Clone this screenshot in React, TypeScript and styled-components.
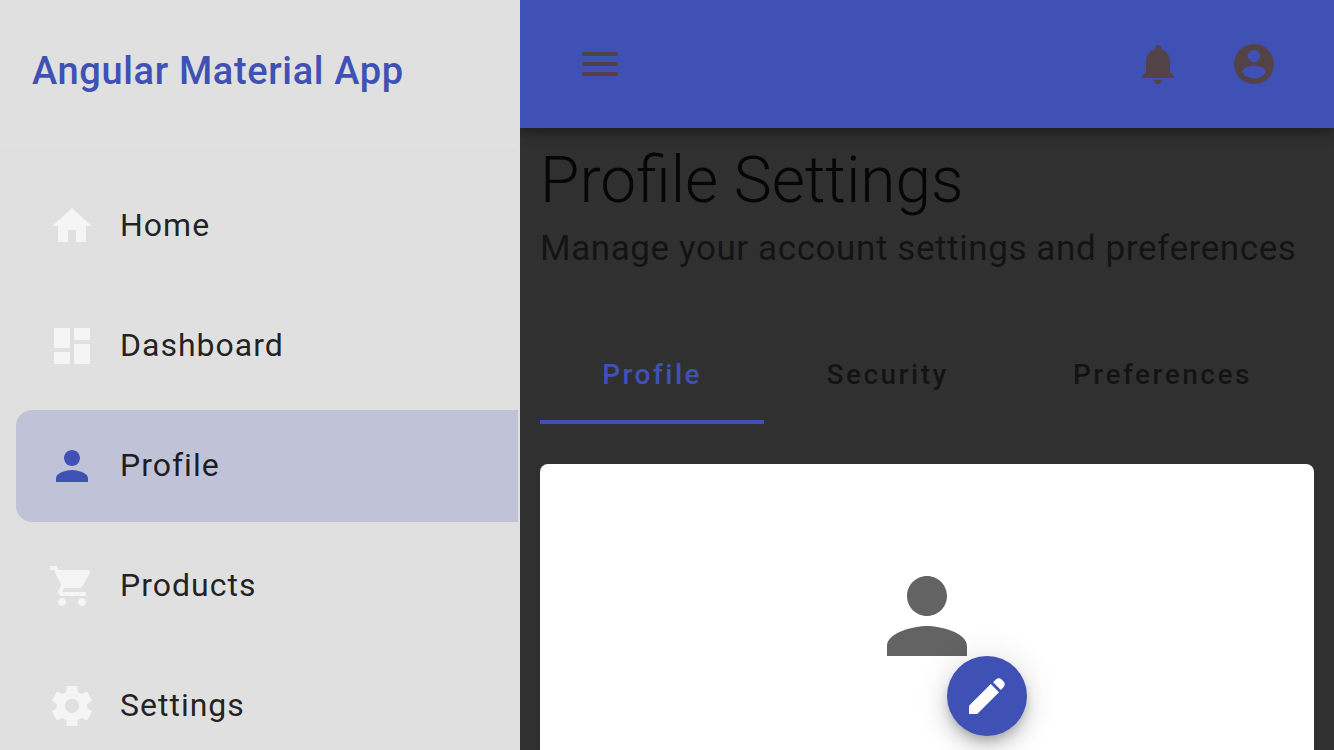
import React from 'react';
import styled, { createGlobalStyle } from 'styled-components';

const PRIMARY = '#3f51b5';

const GlobalStyle = createGlobalStyle`
  *, *::before, *::after { box-sizing: border-box; }
  html, body, #root { height: 100%; }
  body {
    margin: 0;
    overflow: hidden;
    background: #303030;
    font-family: Roboto, "Liberation Sans", sans-serif;
    color: rgba(0, 0, 0, 0.87);
  }
`;

const Shell = styled.div`
  display: flex;
  height: 100%;
`;

const Sidenav = styled.aside`
  flex: none;
  width: 520px;
  overflow: hidden;
  background: #e0e0e0;
  border-right: 2px solid #e0e0e0;
`;

const SidenavHeader = styled.header`
  display: flex;
  align-items: center;
  height: 146px;
  padding: 0 32px 2px;
  border-bottom: 2px solid #e3e3e3;
`;

const AppName = styled.h2`
  margin: 0;
  font-size: 38px;
  line-height: 64px;
  font-weight: 500;
  letter-spacing: 0.017em;
  color: ${PRIMARY};
`;

const NavList = styled.nav`
  display: flex;
  flex-direction: column;
  gap: 8px;
  padding: 24px 0 24px 16px;
`;

const NavItem = styled.a<{ $active?: boolean }>`
  display: flex;
  align-items: center;
  gap: 24px;
  height: 112px;
  padding: 0 32px;
  border-radius: 16px 0 0 16px;
  background: ${(p) => (p.$active ? 'rgba(63, 81, 181, 0.2)' : 'transparent')};
  color: rgba(0, 0, 0, 0.87);
  text-decoration: none;

  svg { color: ${(p) => (p.$active ? PRIMARY : '#f5f5f5')}; }
`;

const NavLabel = styled.span`
  padding-bottom: 2px;
  font-size: 32px;
  line-height: 48px;
  letter-spacing: 0.03125em;
`;

const Svg = styled.svg<{ $size: number }>`
  display: block;
  flex: none;
  width: ${(p) => p.$size}px;
  height: ${(p) => p.$size}px;
  fill: currentColor;
`;

const Main = styled.div`
  flex: 1;
  min-width: 0;
  display: flex;
  flex-direction: column;
  overflow: hidden;
`;

const Toolbar = styled.header`
  flex: none;
  display: flex;
  align-items: center;
  justify-content: space-between;
  height: 128px;
  padding: 0 32px;
  background: ${PRIMARY};
  box-shadow: 0 4px 8px -2px rgba(0, 0, 0, 0.2), 0 8px 10px rgba(0, 0, 0, 0.14),
    0 2px 20px rgba(0, 0, 0, 0.12);
`;

const ToolbarActions = styled.div`
  display: flex;
`;

const IconButton = styled.button`
  display: flex;
  align-items: center;
  justify-content: center;
  width: 96px;
  height: 96px;
  padding: 0;
  border: 0;
  border-radius: 50%;
  background: transparent;
  color: #534346;
  cursor: pointer;
`;

const Content = styled.main`
  padding: 20px;
`;

const PageHeader = styled.div`
  display: flex;
  flex-direction: column;
  gap: 12px;
  margin-bottom: 56px;
`;

const PageTitle = styled.h1`
  margin: 0;
  font-size: 64px;
  line-height: 66px;
  font-weight: 300;
  color: #060606;
`;

const PageSubtitle = styled.p`
  margin: 0;
  font-size: 35px;
  line-height: 46px;
  letter-spacing: 0.017em;
  color: rgba(0, 0, 0, 0.6);
`;

const Tabs = styled.div`
  display: flex;
  height: 96px;
`;

const Tab = styled.button<{ $active?: boolean }>`
  flex: 1 1 auto;
  padding: 0 48px 2px;
  border: 0;
  background: linear-gradient(${PRIMARY}, ${PRIMARY}) bottom / 100%
    ${(p) => (p.$active ? '4px' : '0')} no-repeat;
  color: ${(p) => (p.$active ? PRIMARY : 'rgba(0, 0, 0, 0.6)')};
  font-family: inherit;
  font-size: 28px;
  line-height: 40px;
  font-weight: 500;
  letter-spacing: 0.0892857em;
  cursor: pointer;
`;

const Card = styled.section`
  display: flex;
  justify-content: center;
  margin-top: 40px;
  padding: 72px 32px;
  border-radius: 8px;
  background: #fff;
`;

const Avatar = styled.div`
  position: relative;
  display: flex;
  justify-content: center;
  width: 200px;
  height: 200px;
  padding-top: 20px;
  color: #636363;
`;

const EditButton = styled.button`
  position: absolute;
  right: 0;
  bottom: 0;
  display: flex;
  align-items: center;
  justify-content: center;
  width: 80px;
  height: 80px;
  padding: 0;
  border: 0;
  border-radius: 50%;
  background: ${PRIMARY};
  color: #fff;
  box-shadow: 0 6px 10px -2px rgba(0, 0, 0, 0.2), 0 12px 20px rgba(0, 0, 0, 0.14),
    0 2px 36px rgba(0, 0, 0, 0.12);
  cursor: pointer;
`;

const paths = {
  home: 'M10 20v-6h4v6h5v-8h3L12 3 2 12h3v8z',
  dashboard: 'M3 13h8V3H3v10zm0 8h8v-6H3v6zm10 0h8V11h-8v10zm0-18v6h8V3h-8z',
  person:
    'M12 12c2.21 0 4-1.79 4-4s-1.79-4-4-4-4 1.79-4 4 1.79 4 4 4zm0 2c-2.67 0-8 1.34-8 4v2h16v-2c0-2.66-5.33-4-8-4z',
  cart:
    'M7 18c-1.1 0-1.99.9-1.99 2S5.9 22 7 22s2-.9 2-2-.9-2-2-2zM1 2v2h2l3.6 7.59-1.35 2.45c-.16.28-.25.61-.25.96 0 1.1.9 2 2 2h12v-2H7.42c-.14 0-.25-.11-.25-.25l.03-.12.9-1.63h7.45c.75 0 1.41-.41 1.75-1.03l3.58-6.49c.08-.14.12-.31.12-.48 0-.55-.45-1-1-1H5.21l-.94-2H1zm16 16c-1.1 0-1.99.9-1.99 2s.89 2 1.99 2 2-.9 2-2-.9-2-2-2z',
  settings:
    'M9.4 22l-.4-3.1c-.5-.2-1.1-.5-1.6-.9L4.5 19.2 1.9 14.8l2.5-1.9c-.1-.6-.1-1.2 0-1.8L1.9 9.2l2.6-4.4L7.4 6c.5-.4 1.1-.7 1.6-.9L9.4 2h5.2l.4 3.1c.5.2 1.1.5 1.6.9l2.9-1.2 2.6 4.4-2.5 1.9c.1.6.1 1.2 0 1.8l2.5 1.9-2.6 4.4-2.9-1.2c-.5.4-1.1.7-1.6.9l-.4 3.1zM12 15.5c1.93 0 3.5-1.57 3.5-3.5S13.93 8.5 12 8.5 8.5 10.07 8.5 12s1.57 3.5 3.5 3.5z',
  menu: 'M3 18h18v-2H3v2zm0-5h18v-2H3v2zm0-7v2h18V6H3z',
  bell:
    'M12 22c1.1 0 2-.9 2-2h-4c0 1.1.89 2 2 2zm6-6v-5c0-3.07-1.64-5.64-4.5-6.32V4c0-.83-.67-1.5-1.5-1.5s-1.5.67-1.5 1.5v.68C7.63 5.36 6 7.92 6 11v5l-2 2v1h16v-1l-2-2z',
  account:
    'M12 2C6.48 2 2 6.48 2 12s4.48 10 10 10 10-4.48 10-10S17.52 2 12 2zm0 3c1.66 0 3 1.34 3 3s-1.34 3-3 3-3-1.34-3-3 1.34-3 3-3zm0 14.2c-2.5 0-4.71-1.28-6-3.22.03-1.99 4-3.08 6-3.08 1.99 0 5.97 1.09 6 3.08-1.29 1.94-3.5 3.22-6 3.22z',
  edit:
    'M3 16.9V21h4.1L18 10.1 13.9 6zM15.05 5.1l1.4-1.4c.78-.78 2.05-.78 2.83 0l1.02 1.02c.78.78.78 2.05 0 2.83l-1.4 1.4z',
};

type IconName = keyof typeof paths;

const Icon = ({ name, size = 48 }: { name: IconName; size?: number }) => (
  <Svg $size={size} viewBox="0 0 24 24" aria-hidden="true">
    <path d={paths[name]} />
  </Svg>
);

const navItems: { label: string; icon: IconName }[] = [
  { label: 'Home', icon: 'home' },
  { label: 'Dashboard', icon: 'dashboard' },
  { label: 'Profile', icon: 'person' },
  { label: 'Products', icon: 'cart' },
  { label: 'Settings', icon: 'settings' },
];

const tabs = ['Profile', 'Security', 'Preferences'];

export default function App() {
  const [activeTab, setActiveTab] = React.useState('Profile');

  return (
    <>
      <GlobalStyle />
      <Shell>
        <Sidenav>
          <SidenavHeader>
            <AppName>Angular Material App</AppName>
          </SidenavHeader>
          <NavList>
            {navItems.map(({ label, icon }) => (
              <NavItem
                key={label}
                href={`#${label.toLowerCase()}`}
                $active={label === 'Profile'}
                aria-current={label === 'Profile' ? 'page' : undefined}
              >
                <Icon name={icon} />
                <NavLabel>{label}</NavLabel>
              </NavItem>
            ))}
          </NavList>
        </Sidenav>
        <Main>
          <Toolbar>
            <IconButton aria-label="Toggle menu">
              <Icon name="menu" />
            </IconButton>
            <ToolbarActions>
              <IconButton aria-label="Notifications">
                <Icon name="bell" />
              </IconButton>
              <IconButton aria-label="Account">
                <Icon name="account" />
              </IconButton>
            </ToolbarActions>
          </Toolbar>
          <Content>
            <PageHeader>
              <PageTitle>Profile Settings</PageTitle>
              <PageSubtitle>Manage your account settings and preferences</PageSubtitle>
            </PageHeader>
            <Tabs role="tablist">
              {tabs.map((tab) => (
                <Tab
                  key={tab}
                  role="tab"
                  aria-selected={tab === activeTab}
                  $active={tab === activeTab}
                  onClick={() => setActiveTab(tab)}
                >
                  {tab}
                </Tab>
              ))}
            </Tabs>
            <Card>
              <Avatar>
                <Icon name="person" size={120} />
                <EditButton aria-label="Edit photo">
                  <Icon name="edit" />
                </EditButton>
              </Avatar>
            </Card>
          </Content>
        </Main>
      </Shell>
    </>
  );
}
